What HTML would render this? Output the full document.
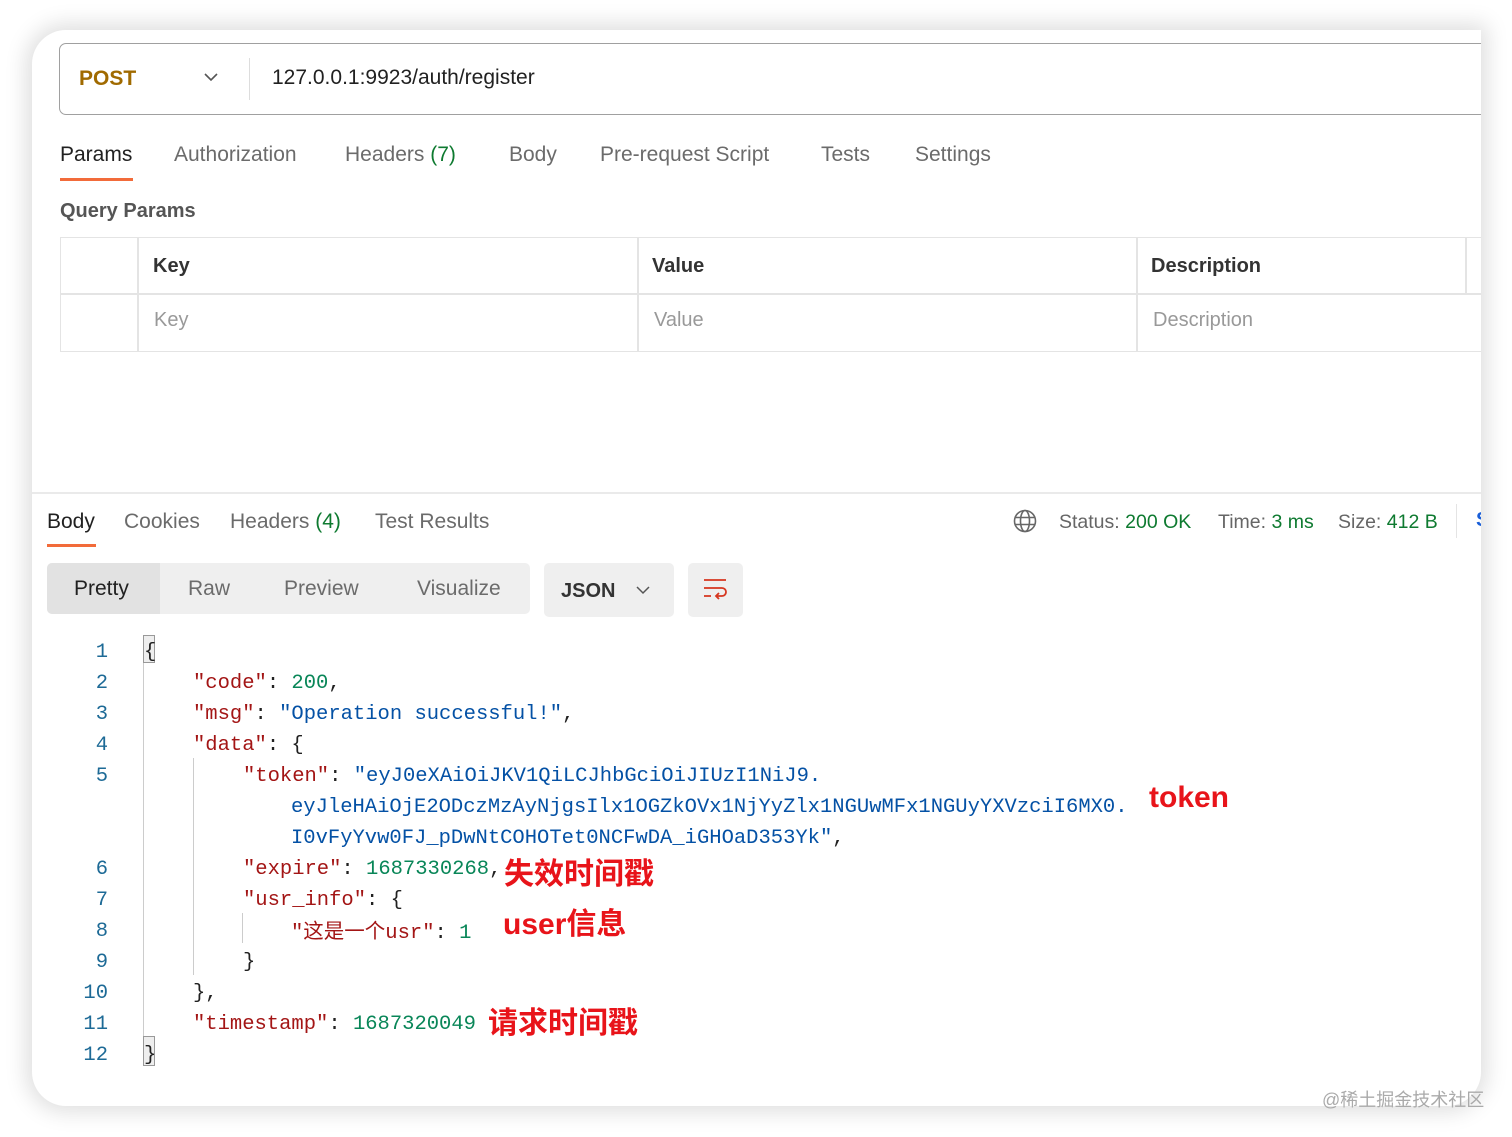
<!DOCTYPE html>
<html><head><meta charset="utf-8"><style>
*{margin:0;padding:0;box-sizing:border-box}
body{width:1512px;height:1137px;background:#fff;position:relative;overflow:hidden;font-family:"Liberation Sans","Noto Sans CJK SC",sans-serif;color:#212121}
.card{position:absolute;left:32px;top:30px;width:1449px;height:1076px;background:#fff;border-radius:34px 0 34px 34px;box-shadow:0 0 22px 6px rgba(0,0,0,.13);overflow:hidden}
.a{position:absolute;white-space:pre}
.t{font-size:21px;color:#6b6b6b}
.code{font-family:"Liberation Mono","Noto Sans CJK SC",monospace;font-size:20.5px}
.ln{color:#1d6a96;text-align:right;width:40px}
.k{color:#a31515}.s{color:#0451a5}.n{color:#098658}.p{color:#212121}
.red{color:#e8141a;font-weight:bold;font-size:30px;font-family:"Liberation Sans","Noto Sans CJK SC",sans-serif}
.g{color:#0e7a30}
</style></head><body>
<div class="card">
 <div class="a" style="left:27px;top:13px;width:1440px;height:72px;border:1.5px solid #a0a0a0;border-radius:7px"></div>
 <div class="a" style="left:47px;top:37px;font-size:21px;font-weight:bold;color:#a06a00">POST</div>
 <svg class="a" style="left:172px;top:42px" width="14" height="10"><path d="M1 2 L7 8 L13 2" fill="none" stroke="#555" stroke-width="1.6"/></svg>
 <div class="a" style="left:217px;top:28px;width:1px;height:42px;background:#ddd"></div>
 <div class="a" style="left:240px;top:36px;font-size:21px;color:#212121">127.0.0.1:9923/auth/register</div>

 <div class="a t" style="left:28px;top:113px;color:#212121">Params</div>
 <div class="a" style="left:28px;top:148px;width:73px;height:3px;background:#f26b3a"></div>
 <div class="a t" style="left:142px;top:113px">Authorization</div>
 <div class="a t" style="left:313px;top:113px">Headers <span class="g">(7)</span></div>
 <div class="a t" style="left:477px;top:113px">Body</div>
 <div class="a t" style="left:568px;top:113px">Pre-request Script</div>
 <div class="a t" style="left:789px;top:113px">Tests</div>
 <div class="a t" style="left:883px;top:113px">Settings</div>
 <div class="a" style="left:28px;top:170px;font-size:20px;font-weight:bold;color:#555">Query Params</div>

 <div class="a" style="left:28px;top:207px;width:1430px;height:115px;border:1.5px solid #e4e4e4"></div>
 <div class="a" style="left:28px;top:263px;width:1430px;height:1.5px;background:#e4e4e4"></div>
 <div class="a" style="left:105px;top:207px;width:1.5px;height:115px;background:#e4e4e4"></div>
 <div class="a" style="left:605px;top:207px;width:1.5px;height:115px;background:#e4e4e4"></div>
 <div class="a" style="left:1104px;top:207px;width:1.5px;height:115px;background:#e4e4e4"></div>
 <div class="a" style="left:1433px;top:207px;width:1.5px;height:57px;background:#e4e4e4"></div>
 <div class="a" style="left:121px;top:225px;font-size:20px;font-weight:bold;color:#333">Key</div>
 <div class="a" style="left:620px;top:225px;font-size:20px;font-weight:bold;color:#333">Value</div>
 <div class="a" style="left:1119px;top:225px;font-size:20px;font-weight:bold;color:#333">Description</div>
 <div class="a" style="left:122px;top:279px;font-size:20px;color:#999">Key</div>
 <div class="a" style="left:622px;top:279px;font-size:20px;color:#999">Value</div>
 <div class="a" style="left:1121px;top:279px;font-size:20px;color:#999">Description</div>

 <div class="a" style="left:0;top:462px;width:1449px;height:2px;background:#eaeaea"></div>
 <div class="a t" style="left:15px;top:480px;color:#212121">Body</div>
 <div class="a" style="left:15px;top:514px;width:49px;height:3px;background:#f26b3a"></div>
 <div class="a t" style="left:92px;top:480px">Cookies</div>
 <div class="a t" style="left:198px;top:480px">Headers <span class="g">(4)</span></div>
 <div class="a t" style="left:343px;top:480px">Test Results</div>
 <svg class="a" style="left:981px;top:479px" width="24" height="24" viewBox="0 0 24 24" fill="none" stroke="#666" stroke-width="1.6"><circle cx="12" cy="12" r="10.5"/><ellipse cx="12" cy="12" rx="4.5" ry="10.5"/><path d="M2 8.5h20M2 15.5h20"/></svg>
 <div class="a" style="left:1027px;top:481px;font-size:19.5px;color:#666">Status: <span class="g">200 OK</span></div>
 <div class="a" style="left:1186px;top:481px;font-size:19.5px;color:#666">Time: <span class="g">3 ms</span></div>
 <div class="a" style="left:1306px;top:481px;font-size:19.5px;color:#666">Size: <span class="g">412 B</span></div>
 <div class="a" style="left:1424px;top:474px;width:1px;height:34px;background:#e4e4e4"></div>
 <div class="a" style="left:1444px;top:479px;font-size:20px;color:#1a5fd8;font-weight:bold">S</div>

 <div class="a" style="left:15px;top:533px;width:483px;height:51px;background:#efefef;border-radius:5px"></div>
 <div class="a" style="left:15px;top:533px;width:113px;height:51px;background:#e2e2e2;border-radius:5px 0 0 5px"></div>
 <div class="a" style="left:42px;top:547px;font-size:21px;color:#212121">Pretty</div>
 <div class="a t" style="left:156px;top:547px">Raw</div>
 <div class="a t" style="left:252px;top:547px">Preview</div>
 <div class="a t" style="left:385px;top:547px">Visualize</div>
 <div class="a" style="left:512px;top:533px;width:130px;height:54px;background:#efefef;border-radius:5px"></div>
 <div class="a" style="left:529px;top:550px;font-size:20px;font-weight:bold;color:#333">JSON</div>
 <svg class="a" style="left:604px;top:555px" width="14" height="10"><path d="M1 2 L7 8 L13 2" fill="none" stroke="#555" stroke-width="1.5"/></svg>
 <div class="a" style="left:656px;top:533px;width:55px;height:54px;background:#efefef;border-radius:5px"></div>
 <svg class="a" style="left:670px;top:547px" width="28" height="26" viewBox="0 0 28 26" fill="none" stroke="#d6361f" stroke-width="1.8"><path d="M2 3h22M2 11h18a4 4 0 0 1 0 8h-6M17 16l-3 3 3 3M2 19h7"/></svg>

 <div class="a" style="left:111px;top:605px;width:12px;height:431px;border-left:1.5px solid #ccc"></div>
 <div class="a" style="left:111px;top:605px;width:12px;height:28px;background:#eee;border:1.5px solid #999"></div>
 <div class="a" style="left:111px;top:1006px;width:12px;height:30px;background:#eee;border:1.5px solid #999"></div>
 <div class="a" style="left:161px;top:728px;height:217px;border-left:1.5px solid #ccc"></div>
 <div class="a" style="left:210px;top:883px;height:30px;border-left:1.5px solid #ccc"></div>

 <div class="code">
 <div class="a ln" style="left:36px;top:611px">1</div>
 <div class="a ln" style="left:36px;top:642px">2</div>
 <div class="a ln" style="left:36px;top:673px">3</div>
 <div class="a ln" style="left:36px;top:704px">4</div>
 <div class="a ln" style="left:36px;top:735px">5</div>
 <div class="a ln" style="left:36px;top:828px">6</div>
 <div class="a ln" style="left:36px;top:859px">7</div>
 <div class="a ln" style="left:36px;top:890px">8</div>
 <div class="a ln" style="left:36px;top:921px">9</div>
 <div class="a ln" style="left:36px;top:952px">10</div>
 <div class="a ln" style="left:36px;top:983px">11</div>
 <div class="a ln" style="left:36px;top:1014px">12</div>
 <div class="a p" style="left:112px;top:611px">{</div>
 <div class="a" style="left:161px;top:642px"><span class="k">"code"</span>: <span class="n">200</span>,</div>
 <div class="a" style="left:161px;top:673px"><span class="k">"msg"</span>: <span class="s">"Operation successful!"</span>,</div>
 <div class="a" style="left:161px;top:704px"><span class="k">"data"</span>: {</div>
 <div class="a" style="left:211px;top:735px"><span class="k">"token"</span>: <span class="s">"eyJ0eXAiOiJKV1QiLCJhbGciOiJIUzI1NiJ9.</span></div>
 <div class="a s" style="left:259px;top:766px">eyJleHAiOjE2ODczMzAyNjgsIlx1OGZkOVx1NjYyZlx1NGUwMFx1NGUyYXVzciI6MX0.</div>
 <div class="a" style="left:259px;top:797px"><span class="s">I0vFyYvw0FJ_pDwNtCOHOTet0NCFwDA_iGHOaD353Yk"</span>,</div>
 <div class="a" style="left:211px;top:828px"><span class="k">"expire"</span>: <span class="n">1687330268</span>,</div>
 <div class="a" style="left:211px;top:859px"><span class="k">"usr_info"</span>: {</div>
 <div class="a" style="left:259px;top:884px"><span class="k">"这是一个usr"</span>: <span class="n">1</span></div>
 <div class="a" style="left:211px;top:921px">}</div>
 <div class="a" style="left:161px;top:952px">},</div>
 <div class="a" style="left:161px;top:983px"><span class="k">"timestamp"</span>: <span class="n">1687320049</span></div>
 <div class="a p" style="left:112px;top:1014px">}</div>
 </div>
 <div class="a red" style="left:1117px;top:751px">token</div>
 <div class="a red" style="left:472px;top:819px">失效时间戳</div>
 <div class="a red" style="left:471px;top:869px">user信息</div>
 <div class="a red" style="left:456px;top:968px">请求时间戳</div>
</div>
<div class="a" style="left:1322px;top:1086px;font-size:18px;color:#aaa">@稀土掘金技术社区</div>
</body></html>
